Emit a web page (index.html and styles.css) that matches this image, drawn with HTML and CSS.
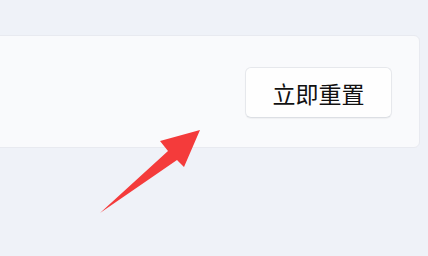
FILE: index.html
```html
<!DOCTYPE html>
<html>
<head>
<meta charset="utf-8">
<link rel="stylesheet" href="styles.css">
</head>
<body>
<div class="page">
  <div class="card">
    <button class="btn">立即重置</button>
  </div>
  <svg class="arrow" width="428" height="256" viewBox="0 0 428 256">
    <polygon points="200,130 160,141 168,151 100,213 177,160 184,167" fill="#f43b3b"/>
  </svg>
</div>
</body>
</html>
```
FILE: styles.css
```css
html, body {
  margin: 0;
  padding: 0;
  background: #eff2f8;
  width: 428px;
  height: 256px;
  overflow: hidden;
}
.page {
  position: relative;
  width: 428px;
  height: 256px;
  padding-top: 35px;
  box-sizing: border-box;
}
.card {
  margin-left: -10px;
  width: 430px;
  height: 113px;
  box-sizing: border-box;
  background: #f9fafc;
  border: 1px solid #e8eaf0;
  border-radius: 6px;
  display: flex;
  justify-content: flex-end;
  align-items: flex-start;
  padding: 31px 27px 0 0;
}
.btn {
  width: 147px;
  height: 51px;
  background: #fefefe;
  border: 1px solid #e6e8ec;
  border-bottom-color: #dcdfe4;
  border-radius: 6px;
  box-shadow: 0 1px 1px rgba(0, 0, 0, 0.04);
  font-family: "Noto Sans CJK SC", "Noto Sans", sans-serif;
  font-size: 23px;
  font-weight: 400;
  color: #111111;
  padding: 0;
}
.arrow {
  position: absolute;
  left: 0;
  top: 0;
}
```
